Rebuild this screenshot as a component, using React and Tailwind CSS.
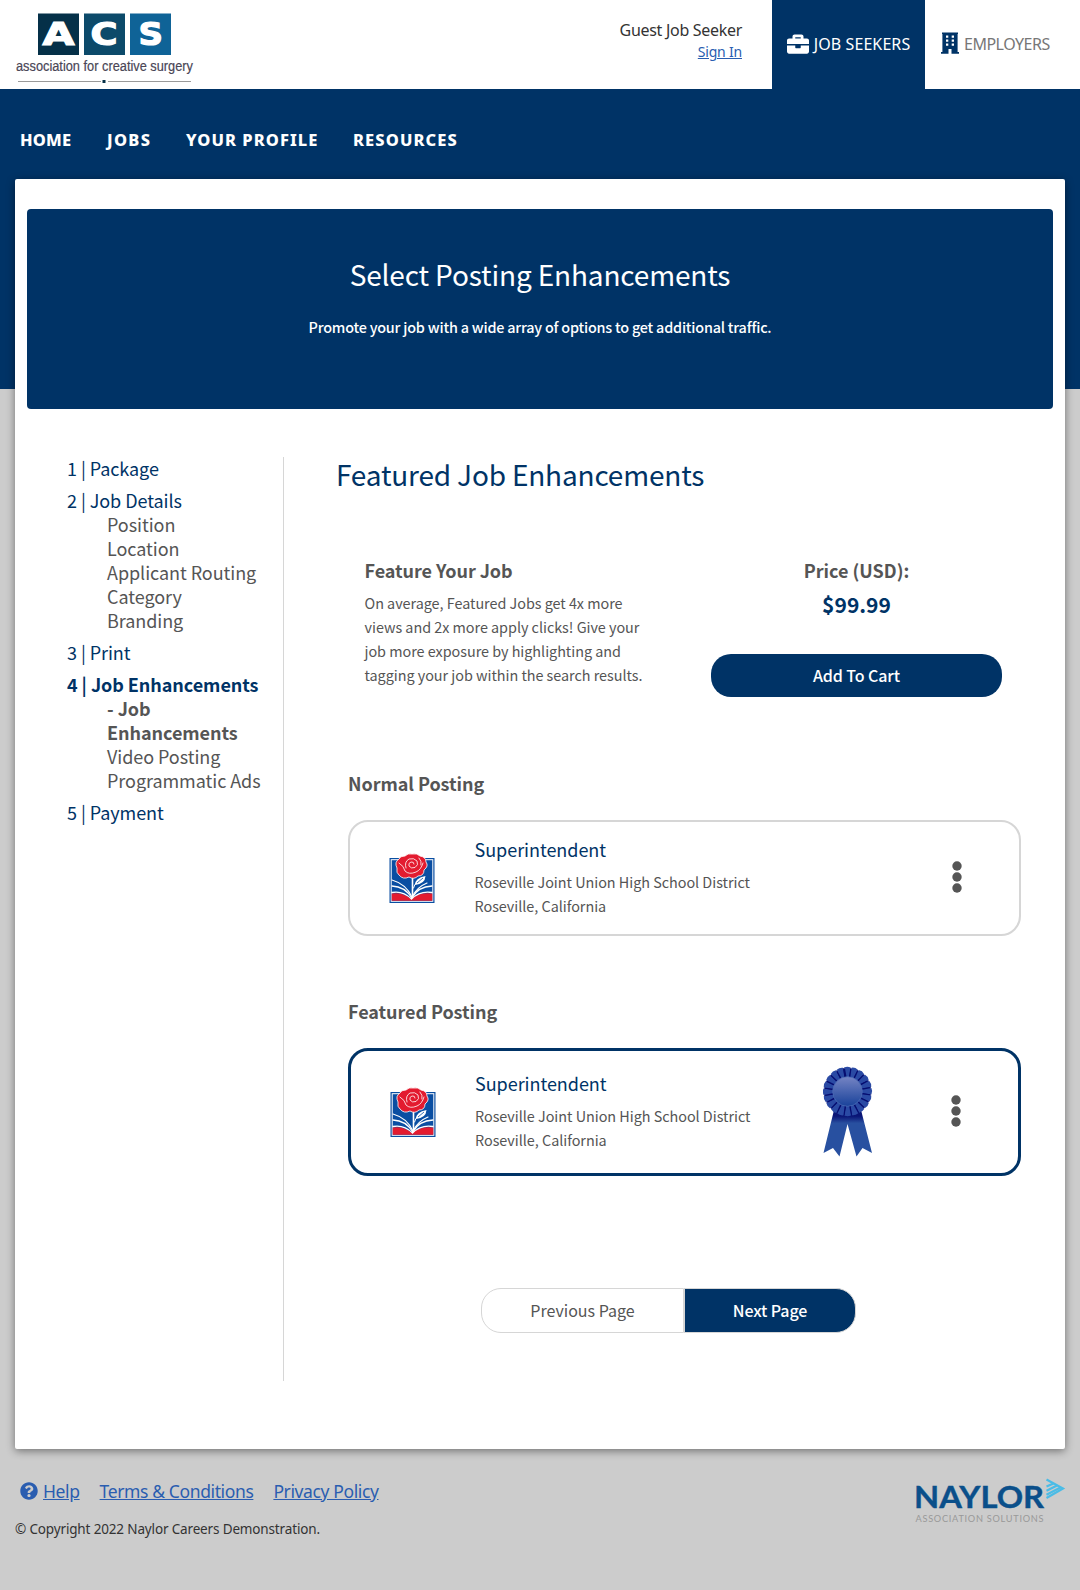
import React from "react";
import { FaBriefcase, FaQuestionCircle } from "react-icons/fa";

function AcsLogo() {
  return (
    <svg width="210" height="89" viewBox="0 0 210 89" className="block overflow-visible" role="img" aria-label="ACS association for creative surgery">
      <rect x="38" y="13.5" width="41" height="41.5" fill="#053048" />
      <rect x="84" y="13.5" width="41" height="41.5" fill="#0c4a6a" />
      <rect x="130" y="13.5" width="41" height="41.5" fill="#0f6397" />
      <g fontFamily="'DejaVu Sans', sans-serif" fontWeight="700" fontSize="31.5" fill="#fff" stroke="#fff" strokeWidth="1.2">
        <text x="42.5" y="45" textLength="32" lengthAdjust="spacingAndGlyphs">A</text>
        <text x="90.5" y="45" textLength="27" lengthAdjust="spacingAndGlyphs">C</text>
        <text x="138.5" y="45" textLength="24.5" lengthAdjust="spacingAndGlyphs">S</text>
      </g>
      <text x="16" y="70.5" textLength="177" lengthAdjust="spacingAndGlyphs" fontFamily="'Liberation Sans', sans-serif" fontSize="15.5" fill="#4a4656" stroke="#4a4656" strokeWidth="0.2">association for creative surgery</text>
      <path d="M18 81.5H101M108 81.5H191" stroke="#9a9a9a" strokeWidth="1.2" />
      <rect x="102.5" y="80" width="3" height="3" fill="#053048" />
    </svg>
  );
}

function Building() {
  return (
    <svg width="18" height="22" viewBox="0 0 18 22" className="mb-[2px] block">
      <path fill="#003366" fillRule="evenodd" d="M1 0.5H17V2H16.6V20H18V21.7H10.5V17H7.5V21.7H0V20H1.4V2H1ZM5 3.5V5.7H7.3V3.5ZM10.7 3.5V5.7H13V3.5ZM5 7.6V9.8H7.3V7.6ZM10.7 7.6V9.8H13V7.6ZM5 11.5V13.7H7.3V11.5ZM10.7 11.5V13.7H13V11.5Z" />
    </svg>
  );
}

function RoseLogo() {
  return (
    <svg width="46" height="50" viewBox="0 0 46 50" className="mt-[2px] block shrink-0">
      <rect x="0.5" y="5" width="45" height="45" fill="#0a4ea2" />
      <rect x="2.2" y="6.7" width="41.6" height="41.6" fill="none" stroke="#fff" strokeWidth="1" />
      <path d="M2.7 40.500Q14 39 22 46Q30 39 43.3 40.500V47.8H2.7Z" fill="#e31b2f" />
      <g fill="none" stroke="#fff" strokeLinecap="round">
        <path d="M3 39.500Q14 37.500 22.500 46Q31 37.500 43 39.500" strokeWidth="1.300" />
        <path d="M3 33Q16 33.500 22.800 45Q29 33.500 43 33" strokeWidth="1.300" />
        <path d="M3 27Q17 31 23 44Q28 34 38 30" strokeWidth="1.200" />
        <path d="M23.500 23V44" strokeWidth="1.600" />
        <path d="M24.500 35Q25 32 28 29" strokeWidth="1" />
      </g>
      <path d="M26 32Q26 25 36.500 23Q36 31 26 32Z" fill="#fff" />
      <path d="M28 30L34 25" stroke="#0a4ea2" strokeWidth="0.8" />
      <path d="M10 22Q7 20 8 15Q5 9 10 6Q11 3 16 3Q19 0 23 1Q28 0 31 3Q37 4 37 9Q40 13 35 17Q35 23 29 23Q25 27 20 24Q14 27 10 22Z" fill="#e31b2f" stroke="#fff" strokeWidth="0.8" />
      <g fill="none" stroke="#fff" strokeWidth="0.8" strokeLinecap="round">
        <path d="M25 11Q25 8.500 22 9Q19 10 20 13Q22 16 26 14.500Q30 12 28 8Q25 4.500 20 6Q15 9 17 15" />
        <path d="M10 10Q15 13 16 18Q20 22 27 19Q32 17 34 10" />
        <path d="M30 5Q33 8 32 12" />
      </g>
    </svg>
  );
}

const PETALS = Array.from({ length: 20 }, (_, i) => i * 18);

function Ribbon() {
  return (
    <svg width="50" height="91" viewBox="0 0 50 91" className="block shrink-0">
      <defs>
        <linearGradient id="disc" x1="0" y1="0" x2="0" y2="1">
          <stop offset="0" stopColor="#7584c4" />
          <stop offset="1" stopColor="#19429a" />
        </linearGradient>
        <linearGradient id="tail" x1="0" y1="0" x2="0" y2="1">
          <stop offset="0" stopColor="#0a1576" />
          <stop offset="0.200" stopColor="#0a1576" />
          <stop offset="0.340" stopColor="#2850a0" />
          <stop offset="1" stopColor="#2850a0" />
        </linearGradient>
      </defs>
      <path d="M12 40L25 50L37 40L49 87L39.500 82L33.500 90.500L24.500 58L16.500 90.500L10 82L0.500 87Z" fill="url(#tail)" />
      <circle cx="24.500" cy="25.500" r="22.800" fill="#08136f" />
      {PETALS.map((a) => (
        <g key={a} transform={`rotate(${a} 24.5 25.5)`}>
          <path d="M23 12L21 1.600Q24.500 0 27.600 1.600L26 12Z" fill="#2a4aa4" />
          <path d="M25.800 12L27.400 1.800L29.200 3L28 12Z" fill="#060d70" />
        </g>
      ))}
      <circle cx="24.500" cy="25.500" r="14.800" fill="url(#disc)" stroke="#4a69b4" strokeWidth="0.8" />
    </svg>
  );
}

function Dots() {
  return (
    <svg width="10" height="32" viewBox="0 0 10 32" className="block" fill="#555">
      <circle cx="5" cy="5" r="4.700" />
      <circle cx="5" cy="16" r="4.700" />
      <circle cx="5" cy="27" r="4.700" />
    </svg>
  );
}

function NaylorLogo() {
  return (
    <svg width="150" height="50" viewBox="0 0 150 50" className="block overflow-visible" role="img" aria-label="Naylor Association Solutions">
      <text x="-1" y="29.500" textLength="130" lengthAdjust="spacingAndGlyphs" fontFamily="Lato, sans-serif" fontWeight="700" fontSize="31" fill="#0a4f8a" stroke="#0a4f8a" strokeWidth="0.4">NAYLOR</text>
      <text x="0.500" y="43.500" textLength="128" lengthAdjust="spacing" fontFamily="Lato, sans-serif" fontSize="9.200" fill="#999">ASSOCIATION SOLUTIONS</text>
      <g fill="none" stroke="#4bbce6" strokeWidth="2.200">
        <path d="M131.500 1.500L148 10.500L131.500 20" />
        <path d="M131.500 8.500L138.500 5.500M131.500 12.800L142 7.500M131.500 16.800L145.500 9.500" />
      </g>
    </svg>
  );
}

function Sub({ children, bold }) {
  return <li className={bold ? "font-bold" : ""}>{children}</li>;
}

function Step({ label, children, bold }) {
  return (
    <li className="mb-2">
      <div className={bold ? "font-bold text-[#003366]" : "text-[#003366]"}>{label}</div>
      {children && <ul className="pl-10 text-[#555]">{children}</ul>}
    </li>
  );
}

function Posting({ featured }) {
  return (
    <div className={featured ? "flex h-[128px] items-center rounded-[20px] border-[3px] border-[#003366] pb-[2px] pl-[39px]" : "flex h-[116px] items-center rounded-[20px] border-2 border-[#d6d6d6] pb-[2px] pl-[39px]"}>
      <RoseLogo />
      <div className={featured ? "ml-[39px] w-[348px] pb-px" : "ml-[39.5px] w-[348px] pb-px"}>
        <div className="mb-[7px] text-[18px] leading-7 tracking-[-0.04px] text-[#003366]">Superintendent</div>
        <div className="text-[14.4px] leading-6 tracking-[-0.03px] text-[#555]">Roseville Joint Union High School District<br />Roseville, California</div>
      </div>
      <div className="w-[50px]">{featured && <Ribbon />}</div>
      <div className={featured ? "ml-[78px]" : "ml-[79px]"}><Dots /></div>
    </div>
  );
}

export default function App() {
  return (
    <div className="min-h-[1590px] w-[1080px] bg-[#ccc] font-['Noto_Sans_CJK_SC',sans-serif] text-[#555]">
      <header className="flex h-[89px] bg-white font-['Noto_Sans',sans-serif]">
        <AcsLogo />
        <div className="ml-auto mr-[30px] flex flex-col items-end pt-[18px]">
          <span className="text-[16px] leading-6 tracking-[-0.3px] text-[#333]">Guest Job Seeker</span>
          <a className="mt-px text-[14px] leading-[18px] tracking-[-0.2px] text-[#2a5db0] underline">Sign In</a>
        </div>
        <div className="flex w-[153px] items-center justify-center gap-[5px] bg-[#003366] pb-[2px] text-[16px] tracking-[0.1px] text-white">
          <FaBriefcase size={22} />
          <span className="whitespace-nowrap">JOB SEEKERS</span>
        </div>
        <div className="flex w-[155px] items-center gap-[5px] pb-[2px] pl-4 text-[16px] tracking-[-0.5px] text-[#777]">
          <Building />
          <span>EMPLOYERS</span>
        </div>
      </header>

      <div className="h-[300px] bg-[#003366]">
        <nav className="flex h-[90px] items-center pl-5 pt-3 font-['Noto_Sans',sans-serif] text-[16.5px] font-extrabold text-white">
          <span className="w-[87px] tracking-[0.2px]">HOME</span>
          <span className="w-[79px] tracking-[1.3px]">JOBS</span>
          <span className="w-[167px] tracking-[1.05px]">YOUR PROFILE</span>
          <span className="tracking-[1.1px]">RESOURCES</span>
        </nav>
      </div>

      <main className="relative mx-[15px] -mt-[210px] h-[1270px] rounded-[2px] bg-white px-3 pt-[30px] shadow-[0_2px_8px_rgba(0,0,0,0.45)]">
        <section className="h-[200px] rounded-[4px] bg-[#003366] pt-[44px] text-center text-white">
          <h1 className="text-[28px] leading-[42px] tracking-[-0.15px]">Select Posting Enhancements</h1>
          <p className="mt-[20px] text-[14.4px] font-medium leading-6 tracking-[-0.21px]">Promote your job with a wide array of options to get additional traffic.</p>
        </section>

        <div className="mt-12 flex">
          <aside className="h-[924px] w-[257px] border-r border-[#d6d6d6] pl-10">
            <ul className="-mt-px w-[200px] text-[18px] leading-6 tracking-[-0.06px]">
              <Step label="1 | Package" />
              <Step label="2 | Job Details">
                <Sub>Position</Sub>
                <Sub>Location</Sub>
                <Sub>Applicant Routing</Sub>
                <Sub>Category</Sub>
                <Sub>Branding</Sub>
              </Step>
              <Step label="3 | Print" />
              <Step label="4 | Job Enhancements" bold>
                <Sub bold>- Job<br />Enhancements</Sub>
                <Sub>Video Posting</Sub>
                <Sub>Programmatic Ads</Sub>
              </Step>
              <Step label="5 | Payment" />
            </ul>
          </aside>

          <div className="ml-[52px] w-[685px]">
            <h2 className="-mt-[2px] text-[28px] leading-[38px] tracking-[-0.18px] text-[#003366]">Featured Job Enhancements</h2>
            <div className="mt-[65px] flex pl-[28.500px]">
              <div className="w-[300px]">
                <h3 className="text-[18px] font-bold leading-6 tracking-[-0.06px]">Feature Your Job</h3>
                <p className="mt-[9px] text-[14.4px] leading-6 tracking-[-0.03px]">On average, Featured Jobs get 4x more<br />views and 2x more apply clicks! Give your<br />job more exposure by highlighting and<br />tagging your job within the search results.</p>
              </div>
              <div className="ml-[46.500px] w-[291px] text-center">
                <h3 className="text-[18px] font-bold leading-6">Price (USD):</h3>
                <div className="mt-[7px] text-[21px] font-bold leading-[30px] text-[#003366]">$99.99</div>
                <button className="mt-[35px] block h-[43px] w-[291px] rounded-[20px] bg-[#003366] pb-px text-[16px] font-medium tracking-[-0.1px] text-white">Add To Cart</button>
              </div>
            </div>

            <div className="mt-[74px] pl-3">
              <h3 className="text-[18px] font-bold leading-6 tracking-[-0.06px]">Normal Posting</h3>
              <div className="mt-[25px]"><Posting /></div>
              <h3 className="mt-[63px] text-[18px] font-bold leading-6 tracking-[-0.06px]">Featured Posting</h3>
              <div className="mt-[25px]"><Posting featured /></div>
            </div>

            <div className="mt-[112px] flex pl-[145px]">
              <button className="h-[45px] w-[203px] rounded-l-[20px] border border-[#d6d6d6] pb-px text-[16px] text-[#555]">Previous Page</button>
              <button className="h-[45px] w-[172px] rounded-r-[20px] border border-[#d6d6d6] bg-[#003366] pb-px text-[16px] font-medium tracking-[-0.1px] text-white">Next Page</button>
            </div>
          </div>
        </div>
      </main>

      <footer className="flex justify-between px-[15px] pt-[29px] font-['Noto_Sans',sans-serif]">
        <div>
          <div className="flex h-[26px] items-center gap-5 pl-[5px] text-[17.5px] tracking-[-0.38px] text-[#2a5db0]">
            <span className="flex items-center gap-[5px]"><FaQuestionCircle size={18} /><a className="underline">Help</a></span>
            <a className="underline">Terms &amp; Conditions</a>
            <a className="underline">Privacy Policy</a>
          </div>
          <p className="mt-[13px] text-[13.5px] leading-6 tracking-[-0.15px] text-[#333]">© Copyright 2022 Naylor Careers Demonstration.</p>
        </div>
        <NaylorLogo />
      </footer>
    </div>
  );
}
